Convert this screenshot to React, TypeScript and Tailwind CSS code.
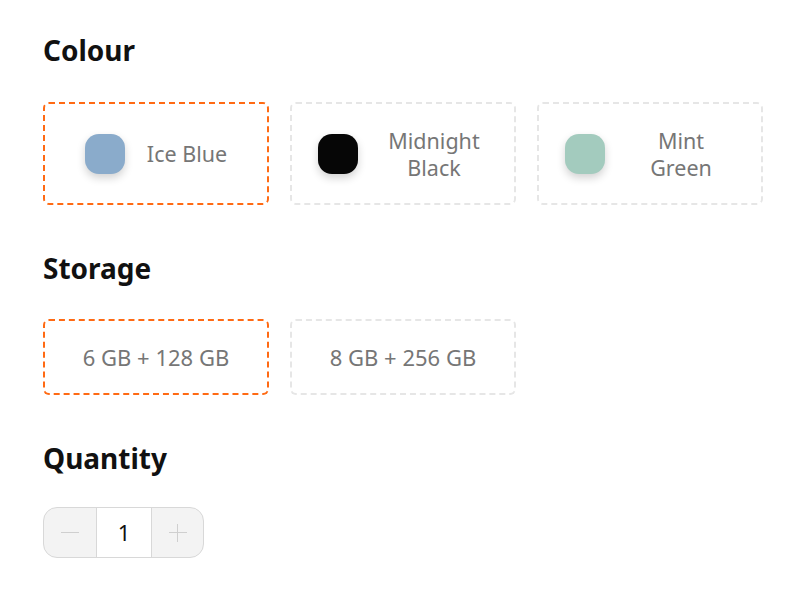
import React from "react";

const colours = [
  { lines: ["Ice Blue"], color: "bg-[#8aabcb]", selected: true },
  { lines: ["Midnight", "Black"], color: "bg-[#060606]", selected: false },
  { lines: ["Mint", "Green"], color: "bg-[#a3cbbe]", selected: false },
];

const storages = [
  { label: "6 GB + 128 GB", selected: true },
  { label: "8 GB + 256 GB", selected: false },
];

function Heading({ children }: { children: React.ReactNode }) {
  return (
    <h2 className="text-[28px] leading-[36px] font-bold text-[#111]">{children}</h2>
  );
}

export default function App() {
  return (
    <div
      className="min-h-[597px] w-[800px] bg-white pl-[43px] pt-[32px]"
      style={{ fontFamily: '"Noto Sans", "Open Sans", sans-serif' }}
    >
      <Heading>Colour</Heading>
      <div className="mt-[34px] flex gap-[21px]">
        {colours.map((c) => (
          <div
            key={c.lines.join(" ")}
            className={`flex h-[103px] w-[226px] items-center justify-center gap-[22px] rounded-[6px] border-2 border-dashed px-[26px] ${
              c.selected ? "border-[#ff6a13]" : "border-[#e6e6e6]"
            }`}
          >
            <div
              className={`h-[40px] w-[40px] shrink-0 rounded-[14px] ${c.color} shadow-[0_4px_8px_rgba(0,0,0,0.18)]`}
            />
            <div
              className={`text-center text-[21.5px] leading-[27px] text-[#767676] ${
                c.lines.length > 1 ? "w-[108px]" : ""
              }`}
            >
              {c.lines.map((l) => (
                <div key={l}>{l}</div>
              ))}
            </div>
          </div>
        ))}
      </div>

      <div className="mt-[45px]">
        <Heading>Storage</Heading>
      </div>
      <div className="mt-[33px] flex gap-[21px]">
        {storages.map((s) => (
          <div
            key={s.label}
            className={`flex h-[76px] w-[226px] items-center justify-center rounded-[6px] border-2 border-dashed text-[22px] text-[#767676] ${
              s.selected ? "border-[#ff6a13]" : "border-[#e6e6e6]"
            }`}
          >
            {s.label}
          </div>
        ))}
      </div>

      <div className="mt-[45px]">
        <Heading>Quantity</Heading>
      </div>
      <div className="mt-[31px] flex h-[51px] w-[161px] overflow-hidden rounded-[14px] border border-[#d8d8d8] bg-[#f3f3f3]">
        <div className="flex w-[52px] items-center justify-center">
          <div className="h-[1.5px] w-[18px] bg-[#cfcfcf]" />
        </div>
        <div className="flex w-[56px] items-center justify-center border-x border-[#d8d8d8] bg-white text-[22px] text-[#111]">
          1
        </div>
        <div className="relative flex flex-1 items-center justify-center">
          <div className="h-[1.5px] w-[18px] bg-[#cfcfcf]" />
          <div className="absolute h-[18px] w-[1.5px] bg-[#cfcfcf]" />
        </div>
      </div>
    </div>
  );
}
